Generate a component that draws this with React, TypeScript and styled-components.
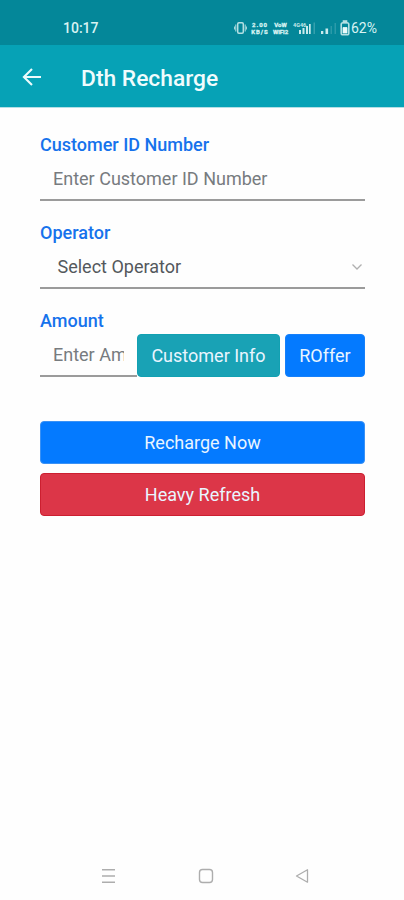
import React from "react";
import styled, { createGlobalStyle } from "styled-components";

const GlobalStyle = createGlobalStyle`
  * { box-sizing: border-box; }
  body { margin: 0; background: #fff; font-family: Roboto, sans-serif; }
`;

const Screen = styled.div`
  width: 404px;
  height: 900px;
  display: flex;
  flex-direction: column;
  background: #fefefe;
  overflow: hidden;
`;

const StatusBar = styled.div`
  height: 45px;
  padding: 10px 26px 0 63px;
  display: flex;
  align-items: center;
  justify-content: space-between;
  background: #048799;
  color: #d8f3f3;
`;

const Clock = styled.span`
  font-size: 14px;
  font-weight: 500;
`;

const StatusIcons = styled.div`
  height: 16px;
  display: flex;
  align-items: center;
`;

const TinyStack = styled.div<{ $width: number; $gap: number; $spacing: number }>`
  width: ${(p) => p.$width}px;
  margin-right: ${(p) => p.$gap}px;
  display: flex;
  flex-direction: column;
  align-items: center;
  font-size: 6px;
  line-height: 7px;
  font-weight: 700;
  letter-spacing: ${(p) => p.$spacing}px;
  white-space: nowrap;
  -webkit-text-stroke: 0.3px currentColor;
`;

const StatusGlyph = styled.svg<{ $gap?: number }>`
  display: block;
  flex: none;
  margin-right: ${(p) => p.$gap ?? 0}px;
`;

const Battery = styled.span`
  font-size: 14px;
  width: 27px;
  white-space: nowrap;
`;

const AppBar = styled.header`
  height: 63px;
  padding: 2px 22px 0;
  display: flex;
  align-items: center;
  gap: 39px;
  background: #06a2b6;
  border-bottom: 1px solid #b4dfe5;
`;

const BackButton = styled.button`
  width: 20px;
  height: 20px;
  padding: 0;
  border: 0;
  background: none;
  display: flex;
`;

const Title = styled.h1`
  margin: 3px 0 0;
  color: #f0fcfd;
  font-size: 22.8px;
  font-weight: 500;
  line-height: 28px;
  white-space: nowrap;
`;

const Form = styled.main`
  flex: 1;
  padding: 24px 39px 0 40px;
  display: flex;
  flex-direction: column;
`;

const Field = styled.div`
  height: 68px;
  margin-bottom: 20px;
`;

const Label = styled.label`
  display: block;
  height: 24px;
  color: #1672ec;
  font-size: 18px;
  font-weight: 500;
  line-height: 25px;
`;

const InputRow = styled.div`
  height: 45px;
  display: flex;
  align-items: flex-end;
`;

const Input = styled.input`
  width: 100%;
  min-width: 0;
  height: 45px;
  padding: 2px 13px 0;
  border: 0;
  border-bottom: 2px solid #9b9b9b;
  border-radius: 0;
  outline: 0;
  background: transparent;
  color: #495057;
  font-family: inherit;
  font-size: 18px;
  &::placeholder { color: #777b7f; opacity: 1; }
`;

const Select = styled.div`
  width: 100%;
  height: 45px;
  padding: 2px 2px 0 17.5px;
  border-bottom: 2px solid #9b9b9b;
  display: flex;
  align-items: center;
  justify-content: space-between;
  color: #54585c;
  font-size: 18px;
`;

const Button = styled.button<{ $bg: string; $edge: string; $width?: number }>`
  flex: none;
  width: ${(p) => (p.$width ? `${p.$width}px` : "100%")};
  height: 43px;
  padding: 0 0 1px;
  border: 1px solid ${(p) => p.$edge};
  border-radius: 4px;
  background: ${(p) => p.$bg};
  color: #e9f5ff;
  font-family: inherit;
  font-size: 18px;
  white-space: nowrap;
`;

const AmountButtons = styled.div`
  display: flex;
  gap: 5px;
`;

const Actions = styled.div`
  margin-top: 25px;
  display: flex;
  flex-direction: column;
  gap: 9px;
`;

const NavBar = styled.nav`
  height: 48px;
  padding: 0 95px 0 101px;
  display: flex;
  align-items: center;
  justify-content: space-between;
`;

export default function App() {
  return (
    <>
      <GlobalStyle />
      <Screen>
        <StatusBar>
          <Clock>10:17</Clock>
          <StatusIcons>
            <StatusGlyph $gap={3} width="13" height="14" viewBox="0 0 13 14" fill="none" stroke="#b5e0e3" strokeWidth="1.5">
              <rect x="3.7" y="1.7" width="5.6" height="10.6" rx="1.2" />
              <path d="M1.8 3.5v7M11.2 3.5v7M.6 5.5v3M12.4 5.5v3" strokeWidth="1" />
            </StatusGlyph>
            <TinyStack $width={20} $gap={3} $spacing={1}>
              <span>2.00</span>
              <span>KB/S</span>
            </TinyStack>
            <TinyStack $width={15} $gap={5} $spacing={0}>
              <span>VoW</span>
              <span>WiFi2</span>
            </TinyStack>
            <StatusGlyph $gap={4} width="23" height="14" viewBox="0 0 23 14" fill="#c9eaec">
              <text x="0" y="5.5" fontSize="5.5" fontWeight="700" fontFamily="Roboto">4G46</text>
              <path d="M6 9h2v4H6zM9.5 7h2v6h-2zM13 5h2v8h-2z" />
              <path d="M16 3h1.7v10H16z" />
              <path d="M20.5 1.5h1.5V13h-1.5z" opacity=".25" />
            </StatusGlyph>
            <StatusGlyph $gap={3} width="17" height="14" viewBox="0 0 17 14" fill="#c9eaec">
              <path d="M1 10h2.3v3H1zM5.5 7.5h2.6V13H5.5z" />
              <path d="M10.5 5H12v8h-1.5zM14.5 2H16v11h-1.5z" opacity=".2" />
            </StatusGlyph>
            <StatusGlyph $gap={1} width="10" height="16" viewBox="0 0 10 16" fill="none" stroke="#b5e0e3" strokeWidth="1.6">
              <path d="M3.5 1h3v1.5h-3z" fill="#c9eaec" />
              <rect x="1.2" y="2.7" width="7.6" height="12" rx="1.8" />
              <path d="M3 7.5h4v5.5H3z" fill="#eafafa" stroke="#eafafa" strokeWidth=".8" />
            </StatusGlyph>
            <Battery>62%</Battery>
          </StatusIcons>
        </StatusBar>
        <AppBar>
          <BackButton aria-label="Back">
            <svg width="20" height="20" viewBox="0 0 20 20" fill="none" stroke="#ecfbfc" strokeWidth="2.1">
              <path d="M19 10H2.5M10 1.9 1.9 10l8.100 8.100" />
            </svg>
          </BackButton>
          <Title>Dth Recharge</Title>
        </AppBar>
        <Form>
          <Field>
            <Label htmlFor="customer">Customer ID Number</Label>
            <InputRow>
              <Input id="customer" placeholder="Enter Customer ID Number" />
            </InputRow>
          </Field>
          <Field>
            <Label>Operator</Label>
            <Select role="combobox" aria-expanded="false">
              Select Operator
              <svg width="12" height="8" viewBox="0 0 12 8" fill="none" stroke="#b0b0b0" strokeWidth="1.3">
                <path d="m1.500 1.500 4.500 4.500 4.500-4.500" />
              </svg>
            </Select>
          </Field>
          <Field>
            <Label htmlFor="amount">Amount</Label>
            <InputRow>
              <Input id="amount" placeholder="Enter Amount" />
              <AmountButtons>
                <Button $bg="#19a2b5" $edge="#12a1b2" $width={143}>Customer Info</Button>
                <Button $bg="#047aff" $edge="#1680fa" $width={80}>ROffer</Button>
              </AmountButtons>
            </InputRow>
          </Field>
          <Actions>
            <Button $bg="#047aff" $edge="#3a91f5">Recharge Now</Button>
            <Button $bg="#dc3648" $edge="#cc1f30">Heavy Refresh</Button>
          </Actions>
        </Form>
        <NavBar>
          <svg width="15" height="16" viewBox="0 0 15 16" stroke="#adadad" strokeWidth="1.4">
            <path d="M1 1.700h13M1 8h13M1 14.300h13" />
          </svg>
          <svg width="16" height="16" viewBox="0 0 16 16" fill="none" stroke="#adadad" strokeWidth="1.4">
            <rect x="1.500" y="1.500" width="13" height="13" rx="3" />
          </svg>
          <svg width="14" height="16" viewBox="0 0 14 16" fill="none" stroke="#adadad" strokeWidth="1.3" strokeLinejoin="round">
            <path d="M12.500 1.800v12.400L1.500 8z" />
          </svg>
        </NavBar>
      </Screen>
    </>
  );
}
